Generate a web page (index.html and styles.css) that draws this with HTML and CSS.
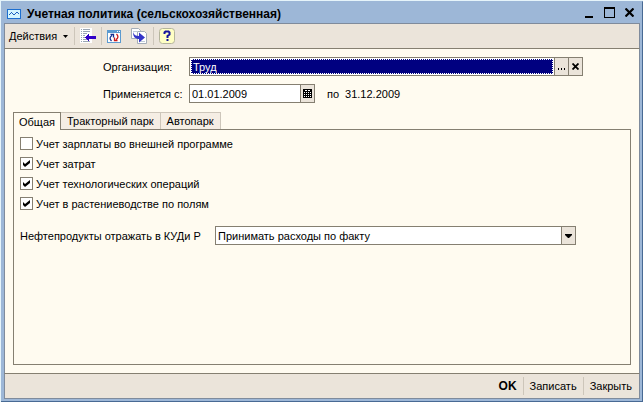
FILE: index.html
```
<!DOCTYPE html>
<html lang="ru">
<head>
    <meta charset="UTF-8">
    <meta name="viewport" content="width=device-width, initial-scale=1.0">
    <title>Учетная политика (сельскохозяйственная)</title>
    <link rel="stylesheet" href="styles.css">
</head>
<body>
    <div class="window">
        <header class="titlebar">
            <svg class="logo" width="14" height="10" viewBox="0 0 14 10" shape-rendering="crispEdges">
                <rect x="0.5" y="0.5" width="13" height="9" fill="#d4f6ff" stroke="#1c6fd0"/>
                <path d="M2 5.5h1M3 4.5h1M4 3.5h1M5 4.5h1M6 5.5h2M8 4.5h1M9 3.5h2M11 4.5h1" stroke="#1c5fc0"/>
            </svg>
            <h1>Учетная политика (сельскохозяйственная)</h1>
            <div class="window-buttons">
                <button type="button" aria-label="Свернуть">
                    <svg width="11" height="11" viewBox="0 0 11 11"><path d="M2 9h8v2H2z"/></svg>
                </button>
                <button type="button" aria-label="Развернуть">
                    <svg width="11" height="11" viewBox="0 0 11 11"><path fill-rule="evenodd" d="M0 0h11v11H0zM1 2v8h9V2z"/></svg>
                </button>
                <button type="button" aria-label="Закрыть окно">
                    <svg width="9" height="9" viewBox="0 0 9 9"><path d="M.5.5l8 8M8.500.5l-8 8" stroke="#000" stroke-width="2.200"/></svg>
                </button>
            </div>
        </header>

        <div class="toolbar">
            <button type="button" class="menu-button">Действия
                <svg width="5" height="3" viewBox="0 0 5 3"><path d="M0 0h5L2.5 3z"/></svg>
            </button>
            <span class="separator"></span>
            <button type="button" class="tool" aria-label="Перейти">
                <svg width="16" height="16" viewBox="0 0 16 16" shape-rendering="crispEdges">
                    <path d="M0 0h12v15H0z" fill="#fff"/>
                    <path d="M1 1.5h1M3 1.5h7M1 3.5h1M3 3.5h7M1 5.5h1M3 5.5h4M1 7.5h1M3 7.5h2M1 9.5h1M3 9.5h2M1 11.5h1M3 11.5h5M1 13.5h1M3 13.5h7" stroke="#9aa6b4"/>
                    <path d="M5 9.5L9 5v3h7v3H9v3z" fill="#3200c8"/>
                </svg>
            </button>
            <span class="separator"></span>
            <button type="button" class="tool" aria-label="Обновить">
                <svg width="14" height="13" viewBox="0 0 14 13">
                    <path d="M0 0h14v13H0z" fill="#5b9ad0"/>
                    <path d="M1 3h12v9H1z" fill="#fff"/>
                    <path d="M10 1h1v1h-1zM12 1h1v1h-1z" fill="#fff"/>
                    <path d="M4.500 11C2.500 9 2.500 7 5 5.500M3.500 4.500h3v3" fill="none" stroke="#142f91" stroke-width="1.300"/>
                    <path d="M9.500 4C11.500 6 11.500 8 9 9.500M10.500 10.500h-3v-3" fill="none" stroke="#cc1818" stroke-width="1.300"/>
                </svg>
            </button>
            <button type="button" class="tool" aria-label="Скопировать">
                <svg width="17" height="16" viewBox="0 0 17 16">
                    <path d="M.5.5h7l2 2v8h-9z" fill="#fff" stroke="#a4adb8"/>
                    <path d="M6.500 3.500h7l2 2v10h-9z" fill="#fff" stroke="#a4adb8"/>
                    <path d="M2 3.500h5M9 13.500h5" stroke="#bfcbd8"/>
                    <path d="M2 4c1 3 3 4 6 4V4.500l6 5-6 5V11C4.500 11 2 9 2 4z" fill="#3434c8"/>
                </svg>
            </button>
            <span class="separator"></span>
            <button type="button" class="tool" aria-label="Справка">
                <svg width="16" height="16" viewBox="0 0 16 16">
                    <rect x="0.5" y="0.5" width="15" height="15" rx="3" fill="#ffffc4" stroke="#b4b49c"/>
                    <path d="M5.500 6V4.500l1-1h3l1 1v2L8.500 8v2" fill="none" stroke="#14149c" stroke-width="2"/>
                    <path d="M7.500 11h2v2h-2z" fill="#14149c"/>
                </svg>
            </button>
        </div>

        <form class="content">
            <div class="fields">
                <label for="org">Организация:</label>
                <div class="field org-field">
                    <input type="text" id="org" value="Труд">
                    <button type="button" aria-label="Выбрать">
                        <svg width="8" height="8" viewBox="0 0 8 8"><path d="M0 5h1v2H0zM3 5h1v2H3zM6 5h1v2H6z"/></svg>
                    </button>
                    <button type="button" aria-label="Очистить">
                        <svg width="7" height="7" viewBox="0 0 7 7"><path d="M.5.5l6 6M6.500.5l-6 6" stroke="#000" stroke-width="1.800"/></svg>
                    </button>
                </div>
                <label for="date">Применяется с:</label>
                <div class="period">
                    <div class="field date-field">
                        <input type="text" id="date" value="01.01.2009">
                        <button type="button" aria-label="Календарь">
                            <svg width="9" height="9" viewBox="0 0 9 9" shape-rendering="crispEdges">
                                <path d="M0 0h9v9H0z"/>
                                <path d="M2 1h2v1H2zM5 1h2v1H5zM1 3h1v1H1zM3 3h1v1H3zM5 3h1v1H5zM7 3h1v1H7zM1 5h1v1H1zM3 5h1v1H3zM5 5h1v1H5zM7 5h1v1H7zM1 7h1v1H1zM3 7h1v1H3zM5 7h1v1H5zM7 7h1v1H7z" fill="#fff"/>
                            </svg>
                        </button>
                    </div>
                    <span>по</span>
                    <span>31.12.2009</span>
                </div>
            </div>

            <div class="tabs" role="tablist">
                <button type="button" class="tab active" role="tab" aria-selected="true">Общая</button>
                <button type="button" class="tab" role="tab" aria-selected="false">Тракторный парк</button>
                <button type="button" class="tab" role="tab" aria-selected="false">Автопарк</button>
            </div>
            <div class="panel" role="tabpanel">
                <label class="check"><input type="checkbox">Учет зарплаты во внешней программе</label>
                <label class="check"><input type="checkbox" checked>Учет затрат</label>
                <label class="check"><input type="checkbox" checked>Учет технологических операций</label>
                <label class="check"><input type="checkbox" checked>Учет в растениеводстве по полям</label>
                <div class="expense">
                    <label for="oil">Нефтепродукты отражать в КУДи Р</label>
                    <div class="field select-field">
                        <select id="oil">
                            <option>Принимать расходы по факту</option>
                        </select>
                        <span class="drop">
                            <svg width="7" height="4" viewBox="0 0 7 4"><path d="M0 0h7v1L4 4H3L0 1z"/></svg>
                        </span>
                    </div>
                </div>
            </div>
        </form>

        <footer class="actions">
            <button type="button" class="primary">OK</button>
            <span class="separator"></span>
            <button type="button">Записать</button>
            <span class="separator"></span>
            <button type="button">Закрыть</button>
        </footer>
    </div>
</body>
</html>
```

FILE: styles.css
```
* {
    box-sizing: border-box;
}
body {
    margin: 0;
    padding: 1px 0 0 1px;
    background: #e6f4fa;
    font-family: "Liberation Sans", Arial, sans-serif;
    font-size: 11px;
    line-height: 14px;
    color: #000;
}
button, input, select {
    font: inherit;
    color: inherit;
    margin: 0;
    padding: 0;
    border: none;
    border-radius: 0;
    background: none;
}
svg {
    display: block;
    flex: none;
}
.window {
    display: flex;
    flex-direction: column;
    min-height: calc(100vh - 1px);
    padding: 0 2px 2px 3px;
    background: #9db7d7;
    border: 1px solid #9db7d7;
    border-right-color: #486a94;
    border-bottom-color: #486a94;
    border-left: 0;
}

/* title */
.titlebar {
    display: flex;
    align-items: center;
    height: 21px;
    padding: 2px 6px 0 3px;
}
.titlebar h1 {
    flex: 1;
    margin: 0 0 0 6px;
    font-size: 12px;
    line-height: 16px;
    white-space: nowrap;
}
.window-buttons {
    display: flex;
    align-items: center;
    gap: 10px;
    margin-top: -2px;
}

/* toolbar */
.toolbar {
    display: flex;
    align-items: center;
    height: 26px;
    padding: 0 4px;
    background: #ebe4da;
    border: 1px solid #7f8b9c;
    border-bottom-color: #857f71;
}
.menu-button {
    display: flex;
    align-items: center;
    gap: 6px;
    margin-right: 6px;
}
.separator {
    width: 1px;
    height: 18px;
    background: #cdc6ba;
}
.tool {
    margin: 0 5px;
}

/* form */
.content {
    flex: 1;
    display: flex;
    flex-direction: column;
    padding: 8px;
    background: #fffbf0;
    border: solid #7f8b9c;
    border-width: 0 1px;
}
.fields {
    display: grid;
    grid-template-columns: 80px 1fr;
    gap: 8px 6px;
    align-items: center;
    padding: 0 48px 0 90px;
}
.fields label {
    white-space: nowrap;
}
.field {
    display: flex;
    height: 19px;
    background: #fff;
    border: 1px solid #857f71;
}
.field input, .field select {
    flex: 1;
    min-width: 0;
    padding: 0 2px;
    outline: none;
}
.field button, .drop {
    display: flex;
    align-items: center;
    justify-content: center;
    width: 14px;
    background: #ebe4da;
    border-left: 1px solid #857f71;
}
.field.org-field input {
    margin: 1px;
    padding: 0 1px;
    color: #fff;
    background: #000080;
    border: 1px dotted #fff;
}
.period {
    display: flex;
    align-items: center;
    gap: 6px;
}
.date-field {
    width: 126px;
    margin-right: 6px;
}

/* tabs */
.tabs {
    display: flex;
    align-items: flex-end;
    margin-top: 9px;
}
.tab {
    height: 17px;
    padding: 0 6px;
    background: #f5eee4;
    border: 1px solid #cdc6ba;
    border-width: 1px 1px 0 0;
}
.tab.active {
    height: 18px;
    margin-bottom: -1px;
    padding: 0 5px;
    background: #fffbf0;
    border-color: #857f71;
    border-width: 1px 1px 0 1px;
    z-index: 1;
}
.panel {
    flex: 1;
    padding: 7px 6px;
    border: 1px solid #857f71;
}
.check {
    display: flex;
    align-items: center;
    gap: 3px;
    height: 13px;
    margin-bottom: 7px;
}
.check input {
    appearance: none;
    width: 13px;
    height: 13px;
    background: #fff;
    border: 1px solid #857f71;
}
.check input:checked {
    background: #fff url("data:image/svg+xml,%3Csvg xmlns='http://www.w3.org/2000/svg' width='7' height='7'%3E%3Cpath d='M0 2l2 2L7 0v3L2 7 0 5z'/%3E%3C/svg%3E") center no-repeat;
}
.expense {
    display: flex;
    align-items: center;
    gap: 12px;
    margin-top: 16px;
    padding-right: 48px;
}
.expense label {
    width: 183px;
    white-space: nowrap;
}
.select-field {
    flex: 1;
}
.select-field select {
    appearance: none;
}
.drop {
    pointer-events: none;
}

/* footer */
.actions {
    display: flex;
    align-items: center;
    justify-content: flex-end;
    gap: 6px;
    height: 26px;
    padding: 0 7px;
    background: #ebe4da;
    border: 1px solid #7f8b9c;
    border-top-color: #857f71;
}
.primary {
    font-size: 12px;
    font-weight: bold;
}
```
